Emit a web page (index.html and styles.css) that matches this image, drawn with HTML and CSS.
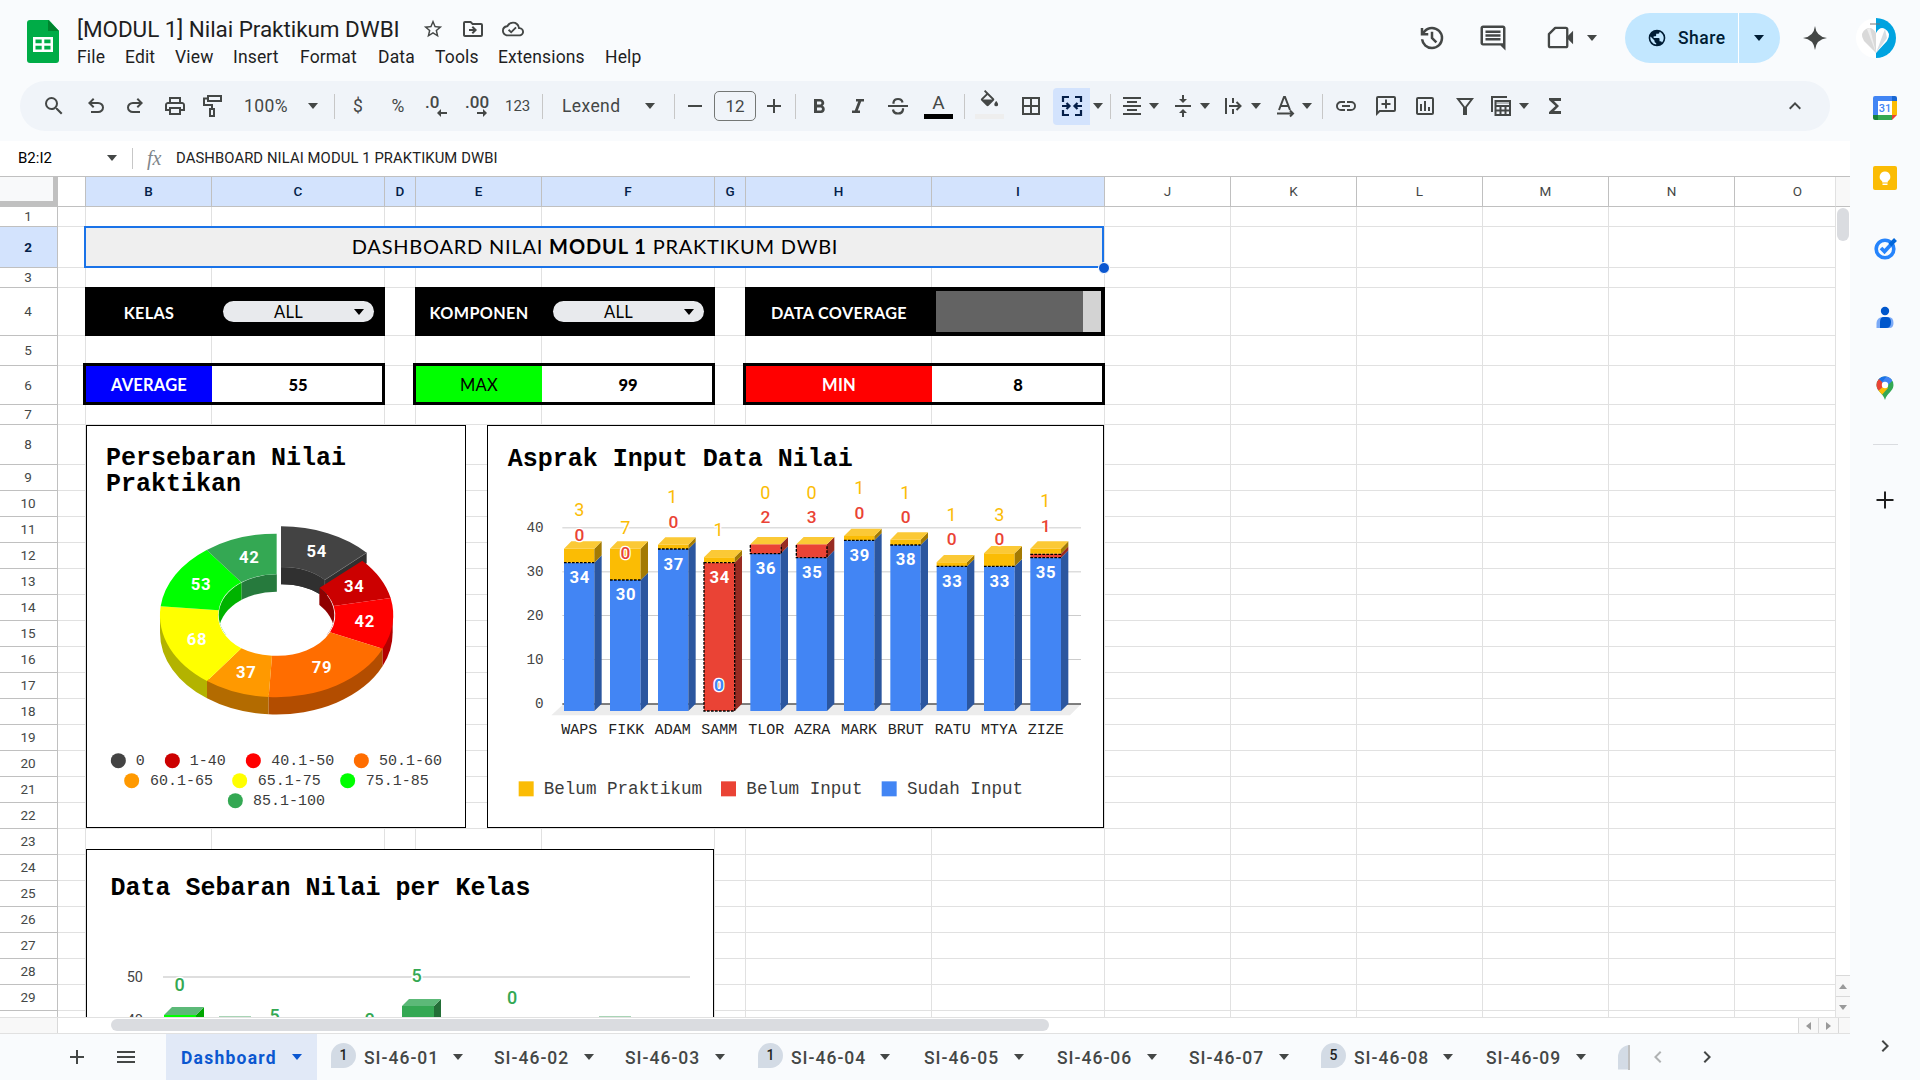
FILE: index.html
```html
<!DOCTYPE html>
<html lang="en">
<head>
<meta charset="utf-8">
<title>[MODUL 1] Nilai Praktikum DWBI</title>
<link rel="stylesheet" href="styles.css">
</head>
<body>
<svg class="defs" aria-hidden="true">
  <symbol id="caret" viewBox="0 0 10 6"><path d="M0 0h10L5 6z"/></symbol>
</svg>
<div class="app">
  <header class="top">
    <svg class="logo" viewBox="0 0 32 43"><path fill="#00ac47" d="M3 0h19l10 11v29a3 3 0 0 1-3 3H3a3 3 0 0 1-3-3V3a3 3 0 0 1 3-3z"/><path fill="#00832d" d="M21 0l11 11H21z"/><path fill="#fff" fill-rule="evenodd" d="M6 17h20v15H6zm2.500 2.500v3.700h6.200v-3.700zm8.800 0v3.700h6.200v-3.700zM8.500 25.700v3.700h6.200v-3.700zm8.800 0v3.700h6.200v-3.700z"/></svg>
    <div class="doc">
      <div class="doc-title">
        <h1>[MODUL 1] Nilai Praktikum DWBI</h1>
        <svg class="ic s22" viewBox="0 0 24 24"><path d="M22 9.240l-7.190-.620L12 2 9.190 8.630 2 9.240l5.460 4.730L5.820 21 12 17.270 18.180 21l-1.630-7.030L22 9.240zM12 15.400l-3.760 2.270 1-4.280-3.320-2.880 4.380-.380L12 6.100l1.710 4.040 4.380.380-3.320 2.880 1 4.280L12 15.400z"/></svg>
        <svg class="ic s24" viewBox="0 0 24 24"><path d="M20 6h-8l-2-2H4a2 2 0 0 0-2 2v12c0 1.100.900 2 2 2h16a2 2 0 0 0 2-2V8a2 2 0 0 0-2-2zm0 12H4V6h5.200l2 2H20v10zm-8-1l4-4-4-4-1.400 1.400 1.600 1.600H8v2h4.200l-1.600 1.600z"/></svg>
        <svg class="ic s22" viewBox="0 0 24 24"><path d="M19.350 10.040A7.490 7.490 0 0 0 12 4C9.110 4 6.600 5.640 5.350 8.040A5.994 5.994 0 0 0 0 14c0 3.310 2.690 6 6 6h13c2.760 0 5-2.240 5-5 0-2.640-2.050-4.780-4.650-4.960zM19 18H6c-2.210 0-4-1.790-4-4 0-2.050 1.530-3.760 3.560-3.970l1.070-.110.500-.950A5.469 5.469 0 0 1 12 6c2.620 0 4.880 1.860 5.390 4.430l.300 1.500 1.530.110A2.980 2.980 0 0 1 22 15c0 1.650-1.350 3-3 3zm-9-3.820l-2.090-2.090L6.500 13.500 10 17l6.010-6.010-1.410-1.410z"/></svg>
      </div>
      <nav class="menu"><span>File</span><span>Edit</span><span>View</span><span>Insert</span><span>Format</span><span>Data</span><span>Tools</span><span>Extensions</span><span>Help</span></nav>
    </div>
    <div class="actions">
      <svg class="ic s30" viewBox="0 0 24 24"><path d="M12 21q-3.450 0-6.012-2.288T3.050 13H5.100q.350 2.600 2.312 4.300T12 19q2.925 0 4.963-2.038T19 12t-2.037-4.962T12 5q-1.725 0-3.225.800T6.250 8H9v2H3V4h2v2.350q1.275-1.600 3.113-2.475T12 3q1.875 0 3.513.713t2.850 1.924 1.925 2.850T21 12t-.712 3.513-1.925 2.850-2.850 1.925T12 21m2.800-4.800L11 12.400V7h2v4.600l3.200 3.200z"/></svg>
      <svg class="ic s30" viewBox="0 0 24 24"><path d="M21.990 4c0-1.100-.890-2-1.990-2H4c-1.100 0-2 .900-2 2v12c0 1.100.900 2 2 2h14l4 4-.010-18zM20 4v12.200H4V4h16zM6 12h12v2H6zm0-3h12v2H6zm0-3h12v2H6z"/></svg>
      <svg class="ic meet" viewBox="0 0 28 28"><path fill="none" stroke="currentColor" stroke-width="2.400" stroke-linejoin="round" d="M8.500 3.500h11a1.500 1.500 0 0 1 1.500 1.500v17a1.500 1.500 0 0 1-1.500 1.500H3.500A1.500 1.500 0 0 1 2 22V10z"/><path d="M20 13.500l7-7v14z"/></svg>
      <svg class="ic caret"><use href="#caret"/></svg>
      <div class="share">
        <svg class="s20" viewBox="0 0 24 24"><path d="M12 2a10 10 0 1 0 0 20 10 10 0 0 0 0-20zm-1 17.930A7.990 7.990 0 0 1 4.210 10.200L9 15v1a2 2 0 0 0 2 2zm6.900-2.540A2 2 0 0 0 16 16h-1v-3a1 1 0 0 0-1-1H8v-2h2a1 1 0 0 0 1-1V7h2a2 2 0 0 0 2-2v-.410a7.990 7.990 0 0 1 2.900 12.800z"/></svg>
        <span>Share</span>
        <i></i>
        <svg class="caret"><use href="#caret"/></svg>
      </div>
      <svg class="ic gem" viewBox="0 0 24 24"><path d="M12 0q1.200 10.800 12 12-10.800 1.200-12 12Q10.800 13.200 0 12 10.800 10.800 12 0z"/></svg>
      <svg class="avatar" viewBox="0 0 40 40"><circle cx="20" cy="20" r="20" fill="#fff"/><path fill="#00a3e0" d="M20 0a20 20 0 0 1 0 40z"/><path fill="#d9d9d9" d="M20 15q-4-7-10-4-7 4-2 12l12 12z"/><path fill="#eee" d="M14 10l6 25-9-24z"/><path fill="#fff" d="M20 15q4-7 9-4 7 4 2 12L20 35z"/><path fill="#d5dde3" d="M29 11l2 9-11 15z"/><path stroke="#777" d="M14 6h10"/></svg>
    </div>
  </header>

  <div class="body">
    <main class="main">
      <div class="toolbar">
        <svg class="ic s24" viewBox="0 0 24 24"><path d="M15.500 14h-.790l-.280-.270A6.470 6.470 0 0 0 16 9.500 6.500 6.500 0 1 0 9.500 16c1.610 0 3.090-.590 4.230-1.570l.270.280v.790l5 4.990L20.490 19l-4.990-5zm-6 0a4.500 4.500 0 1 1 0-9 4.500 4.500 0 0 1 0 9z"/></svg>
        <svg class="ic s24" viewBox="0 0 24 24"><path d="M7 19v-2h7.100q1.575 0 2.738-1T18 13.500 16.838 11 14.100 10H7.800l2.600 2.600L9 14 4 9l5-5 1.400 1.400L7.800 8h6.300q2.425 0 4.163 1.575T20 13.500t-1.737 3.925T14.100 19z"/></svg>
        <svg class="ic s24" viewBox="0 0 24 24"><path d="M9.900 19q-2.425 0-4.163-1.575T4 13.500t1.738-3.925T9.900 8h6.300l-2.600-2.600L15 4l5 5-5 5-1.400-1.400 2.600-2.600H9.900q-1.575 0-2.737 1T6 13.500 7.163 16 9.900 17H17v2z"/></svg>
        <svg class="ic s24" viewBox="0 0 24 24"><path d="M19 8h-1V3H6v5H5c-1.660 0-3 1.340-3 3v6h4v4h12v-4h4v-6c0-1.660-1.340-3-3-3zM8 5h8v3H8V5zm8 12v2H8v-4h8v2zm2-2v-2H6v2H4v-4c0-.550.450-1 1-1h14c.550 0 1 .450 1 1v4h-2z"/></svg>
        <svg class="ic s24" viewBox="0 0 24 24"><path fill="none" stroke="currentColor" stroke-width="2" d="M7 2h13v5H7zM7 4.500H3V11h8v4M9 15h4v7H9z"/></svg>
        <span class="t zoom">100%</span>
        <svg class="ic caret"><use href="#caret"/></svg>
        <i class="sep"></i>
        <span class="t ctr">$</span>
        <span class="t ctr">%</span>
        <span class="t dec">.0<svg viewBox="0 0 10 8"><path d="M10 3H4V0L0 4l4 4V5h6z"/></svg></span>
        <span class="t dec">.00<svg viewBox="0 0 10 8"><path d="M0 3h6V0l4 4-4 4V5H0z"/></svg></span>
        <span class="t num">123</span>
        <i class="sep"></i>
        <span class="t font">Lexend</span>
        <svg class="ic caret"><use href="#caret"/></svg>
        <i class="sep"></i>
        <svg class="ic s24" viewBox="0 0 24 24"><path d="M5 11h14v2H5z"/></svg>
        <span class="size">12</span>
        <svg class="ic s24" viewBox="0 0 24 24"><path d="M5 11h6V5h2v6h6v2h-6v6h-2v-6H5z"/></svg>
        <i class="sep"></i>
        <svg class="ic s24" viewBox="0 0 24 24"><path d="M15.600 11.790c.970-.670 1.650-1.770 1.650-2.790 0-2.260-1.750-4-4-4H7v14h7.040c2.090 0 3.710-1.700 3.710-3.790 0-1.520-.860-2.820-2.150-3.420zM10 7.500h3c.830 0 1.500.670 1.500 1.500s-.670 1.500-1.500 1.500h-3v-3zm3.500 9H10v-3h3.500c.830 0 1.500.670 1.500 1.500s-.670 1.500-1.500 1.500z"/></svg>
        <svg class="ic s24" viewBox="0 0 24 24"><path d="M10 5v2.500h2.210l-3.420 9H6V19h8v-2.500h-2.210l3.420-9H18V5z"/></svg>
        <svg class="ic s24" viewBox="0 0 24 24"><path d="M2 11h20v2H2z"/><path fill="none" stroke="currentColor" stroke-width="2.200" d="M16.500 8.500Q16 5 12 5T7.500 8.500v1.200M7 15.500q.500 4 5 4t5-4v-1.200"/></svg>
        <span class="ink"><b>A</b><i class="black"></i></span>
        <i class="sep"></i>
        <span class="ink"><svg class="ic s24" viewBox="0 0 24 24"><path d="M16.560 8.940L7.620 0 6.210 1.410l2.380 2.380-5.150 5.150a1.490 1.490 0 0 0 0 2.120l5.500 5.500c.290.290.680.440 1.060.440s.770-.150 1.060-.440l5.500-5.500c.590-.580.590-1.530 0-2.120zM5.210 10L10 5.210 14.790 10H5.210zM19 11.500s-2 2.170-2 3.500a2 2 0 0 0 4 0c0-1.330-2-3.500-2-3.500z"/></svg><i></i></span>
        <svg class="ic s24" viewBox="0 0 24 24"><path d="M3 3v18h18V3H3zm8 16H5v-6h6v6zm0-8H5V5h6v6zm8 8h-6v-6h6v6zm0-8h-6V5h6v6z"/></svg>
        <span class="merge"><svg class="s24" viewBox="0 0 24 24"><path fill="none" stroke="currentColor" stroke-width="2.200" d="M9 3H3v5M3 16v5h6M15 3h6v5M21 16v5h-6M2 12h7M22 12h-7M6.500 9l3 3-3 3M17.500 9l-3 3 3 3"/></svg></span>
        <svg class="ic caret"><use href="#caret"/></svg>
        <i class="sep"></i>
        <svg class="ic s24" viewBox="0 0 24 24"><path d="M7 15v2h10v-2H7zm-4 6h18v-2H3v2zm0-8h18v-2H3v2zm4-6v2h10V7H7zM3 3v2h18V3H3z"/></svg>
        <svg class="ic caret"><use href="#caret"/></svg>
        <svg class="ic s24" viewBox="0 0 24 24"><path d="M8 19h3v4h2v-4h3l-4-4-4 4zm8-14h-3V1h-2v4H8l4 4 4-4zM4 11v2h16v-2H4z"/></svg>
        <svg class="ic caret"><use href="#caret"/></svg>
        <svg class="ic s24" viewBox="0 0 24 24"><path fill="none" stroke="currentColor" stroke-width="2" d="M5 4v16M12 4v5M12 15v5M8 12h11M15.500 8l4 4-4 4"/></svg>
        <svg class="ic caret"><use href="#caret"/></svg>
        <svg class="ic s24" viewBox="0 0 24 24"><path fill="none" stroke="currentColor" stroke-width="2" d="M6 16l5-13h1l5 13M8 12h7M4 19.500h16M17 16.500l3 3-3 3"/></svg>
        <svg class="ic caret"><use href="#caret"/></svg>
        <i class="sep"></i>
        <svg class="ic s24" viewBox="0 0 24 24"><path d="M3.900 12c0-1.710 1.390-3.100 3.100-3.100h4V7H7a5 5 0 0 0 0 10h4v-1.900H7A3.100 3.100 0 0 1 3.900 12zM8 13h8v-2H8v2zm9-6h-4v1.900h4a3.100 3.100 0 0 1 0 6.200h-4V17h4a5 5 0 0 0 0-10z"/></svg>
        <svg class="ic s24" viewBox="0 0 24 24"><path d="M22 4a2 2 0 0 0-2-2H4a2 2 0 0 0-2 2v18l4-4h14a2 2 0 0 0 2-2V4zM4 4h16v12H5.200L4 17.200V4zm7 1.500h2V9h3.500v2H13v3.500h-2V11H7.500V9H11z"/></svg>
        <svg class="ic s24" viewBox="0 0 24 24"><path d="M19 3H5a2 2 0 0 0-2 2v14c0 1.100.900 2 2 2h14a2 2 0 0 0 2-2V5a2 2 0 0 0-2-2zm0 16H5V5h14v14zM7 10h2v7H7zm4-3h2v10h-2zm4 6h2v4h-2z"/></svg>
        <svg class="ic s24" viewBox="0 0 24 24"><path fill="none" stroke="currentColor" stroke-width="2" d="M5 5h14l-6 8v7h-2v-7z"/></svg>
        <svg class="ic s24" viewBox="0 0 24 24"><path fill="none" stroke="currentColor" stroke-width="2" d="M3 18V3h15M6.500 7H21v14H6.500zM6 12h15M6 16.500h15M11.500 12v9M16.500 12v9"/><path d="M6 6h15v4H6z" opacity=".35"/></svg>
        <svg class="ic caret"><use href="#caret"/></svg>
        <svg class="ic s24" viewBox="0 0 24 24"><path d="M18 4H6v2l6.500 6L6 18v2h12v-3h-7l5-5-5-5h7z"/></svg>
        <svg class="ic s24" viewBox="0 0 24 24"><path d="M12 8l-6 6 1.410 1.410L12 10.830l4.590 4.580L18 14z"/></svg>
      </div>

      <div class="fbar">
        <span class="ref">B2:I2</span>
        <svg class="ic caret"><use href="#caret"/></svg>
        <i class="sep"></i>
        <em>fx</em>
        <span class="formula">DASHBOARD NILAI MODUL 1 PRAKTIKUM DWBI</span>
      </div>

      <div class="sheet">
        <div class="grid">
          <div class="colheads"><span class="corner"></span><span></span><span class="on">B</span><span class="on">C</span><span class="on">D</span><span class="on">E</span><span class="on">F</span><span class="on">G</span><span class="on">H</span><span class="on">I</span><span>J</span><span>K</span><span>L</span><span>M</span><span>N</span><span class="last">O</span></div>
          <div class="rowheads"><span>1</span><span class="on">2</span><span>3</span><span>4</span><span>5</span><span>6</span><span>7</span><span>8</span><span>9</span><span>10</span><span>11</span><span>12</span><span>13</span><span>14</span><span>15</span><span>16</span><span>17</span><span>18</span><span>19</span><span>20</span><span>21</span><span>22</span><span>23</span><span>24</span><span>25</span><span>26</span><span>27</span><span>28</span><span>29</span><span></span></div>
          <div class="collines"><i></i><i></i><i></i><i></i><i></i><i></i><i></i><i></i><i></i><i></i><i></i><i></i><i></i><i></i><i></i></div>
          <div class="rowlines"><i></i><i></i><i></i><i></i><i></i><i></i><i></i><i></i><i></i><i></i><i></i><i></i><i></i><i></i><i></i><i></i><i></i><i></i><i></i><i></i><i></i><i></i><i></i><i></i><i></i><i></i><i></i><i></i><i></i></div>

          <div class="heading"><span>DASHBOARD NILAI <b>MODUL 1</b> PRAKTIKUM DWBI</span><i class="handle"></i></div>

          <div class="ctl kelas"><b>KELAS</b><div class="chip"><span>ALL</span><svg class="caret"><use href="#caret"/></svg></div></div>
          <div class="ctl komponen"><b>KOMPONEN</b><div class="chip"><span>ALL</span><svg class="caret"><use href="#caret"/></svg></div></div>
          <div class="ctl cover"><b>DATA COVERAGE</b><div class="bar"><i></i></div></div>

          <div class="stat avg"><b>AVERAGE</b><strong>55</strong></div>
          <div class="stat max"><b>MAX</b><strong>99</strong></div>
          <div class="stat min"><b>MIN</b><strong>8</strong></div>

          <svg class="chart pie" viewBox="48 30 1140 1209">
            <defs><clipPath id="hole"><ellipse cx="619.500" cy="600" rx="173.500" ry="122"/></clipPath></defs>
            <g class="ctitle"><text x="108" y="151">Persebaran Nilai</text><text x="108" y="227">Praktikan</text></g>
            <path fill="#303030" d="M633 457Q710 457 764 495L890 413V445L764 547Q710 508 633 508z"/>
            <path fill="#434343" d="M633 334A349 245 0 0 1 890 413L764 495A173 122 0 0 0 633 457z"/>
            <path fill="none" stroke="#777" stroke-width="1.500" d="M633 457A173 122 0 0 1 764 495L890 413M764 495v20"/>
            <path fill="#b3b300" d="M270 601V653A349 245 0 0 0 411 850V790z"/>
            <path fill="#b36b00" d="M411 790V850A349 245 0 0 0 596 898V840z"/>
            <path fill="#b34d00" d="M596 840V898A349 245 0 0 0 938 753V695z"/>
            <path fill="#b30000" d="M938 695V753Q968 705 968 653V601z"/>
            <g clip-path="url(#hole)"><path fill="#00b300" d="M440 480h75v180h-75z"/><path fill="#267a3d" d="M515 470h105.500v100H515z"/><path fill="#8f0000" d="M748 500h50v160h-50z"/><ellipse cx="619.500" cy="652" rx="173.500" ry="122" fill="#fff"/></g>
            <path fill="#303030" d="M633 457A173 122 0 0 1 764 495L748 517V537A173 122 0 0 0 633 508z"/>
            <path fill="#cc0000" d="M877 437A349 245 0 0 1 962 549L791 573A173.500 122 0 0 0 749 518z"/>
            <path fill="#ff0000" d="M962 549A349 245 0 0 1 938 701L780 652A173.500 122 0 0 0 791 573z"/>
            <path fill="#ff6d00" d="M938 701A349 245 0 0 1 596 846L606 722A173.500 122 0 0 0 780 652z"/>
            <path fill="#ff9900" d="M596 846A349 245 0 0 1 411 798L514 700A173.500 122 0 0 0 606 722z"/>
            <path fill="#ffff00" d="M411 798A349 245 0 0 1 272 574L446 586A173.500 122 0 0 0 514 700z"/>
            <path fill="#00ff00" d="M272 574A349 245 0 0 1 410 405L514 502A173.500 122 0 0 0 446 586z"/>
            <path fill="#34a853" d="M410 405A349 245 0 0 1 620 356V478A173.500 122 0 0 0 514 502z"/>
            <g class="wl"><text x="740" y="426">54</text><text x="853" y="531">34</text><text x="884" y="636">42</text><text x="756" y="773">79</text><text x="529" y="789">37</text><text x="381" y="690">68</text><text x="393" y="525">53</text><text x="538" y="444">42</text></g>
            <g class="lg"><circle cx="145" cy="1037" r="22.500" fill="#434343"/><circle cx="307" cy="1037" r="22.500" fill="#c00"/><circle cx="550" cy="1037" r="22.500" fill="red"/><circle cx="874" cy="1037" r="22.500" fill="#ff6d00"/><circle cx="185" cy="1097" r="22.500" fill="#f90"/><circle cx="509" cy="1097" r="22.500" fill="#ff0"/><circle cx="833" cy="1097" r="22.500" fill="#0f0"/><circle cx="496" cy="1157" r="22.500" fill="#34a853"/>
            <text x="197" y="1051">0</text><text x="359" y="1051">1-40</text><text x="604" y="1051">40.1-50</text><text x="927" y="1051">50.1-60</text><text x="240" y="1111">60.1-65</text><text x="563" y="1111">65.1-75</text><text x="887" y="1111">75.1-85</text><text x="549" y="1171">85.1-100</text></g>
          </svg>

          <svg class="chart asprak" viewBox="21 30 1851 1209">
            <g class="ctitle"><text x="83" y="154">Asprak Input Data Nilai</text></g>
            <path stroke="#ccc" stroke-width="3" d="M247 338.500H1803M247 470.500H1803M247 601.500H1803M247 733.500H1803"/>
            <path fill="#ececec" d="M214 901L250 868H1803L1770 901z"/><path stroke="#555" stroke-width="4" d="M247 867H1803"/>
            <g class="blue"><path d="M252 443h91v445h-91zM390 495h92v393h-92zM534 402h91v486h-91zM811 416h91v472h-91zM949 428h92v460h-92zM1092 376h91v512h-91zM1231 390h91v498h-91zM1370 454h91v434h-91zM1512 454h92v434h-92zM1651 428h92v460h-92z"/></g>
            <g class="blued"><path d="M343 443l22-22V866l-22 22zM482 495l22-22V866l-22 22zM625 402l22-22V866l-22 22zM902 416l22-22V866l-22 22zM1041 428l22-22V866l-22 22zM1183 376l22-22V866l-22 22zM1322 390l22-22V866l-22 22zM1461 454l22-22V866l-22 22zM1604 454l22-22V866l-22 22zM1743 428l22-22V866l-22 22z"/></g>
            <g class="red"><path d="M672 443h92v445h-92zM811 388h91v28h-91zM949 388h92v40h-92zM1651 416h92v12h-92z"/></g>
            <g class="redd"><path d="M764 443l22-22V866l-22 22zM902 388l22-22v28l-22 22zM1041 388l22-22v40l-22 22zM1743 416l22-22v12l-22 22z"/></g>
            <g class="yel"><path d="M252 401h91v42h-91zM390 401h92v94h-92zM534 389h91v13h-91zM672 427h92v16h-92zM1092 363h91v13h-91zM1231 374h91v16h-91zM1370 442h91v12h-91zM1512 415h92v39h-92zM1651 401h92v15h-92z"/></g>
            <g class="yeld"><path d="M343 401l22-22v42l-22 22zM482 401l22-22v94l-22 22zM625 389l22-22v13l-22 22zM764 427l22-22v16l-22 22zM1183 363l22-22v13l-22 22zM1322 374l22-22v16l-22 22zM1461 442l22-22v12l-22 22zM1604 415l22-22v39l-22 22zM1743 401l22-22v15l-22 22z"/></g>
            <g class="yelt"><path d="M252 401l22-22h91l-22 22zM390 401l22-22h92l-22 22zM534 389l22-22h91l-22 22zM672 427l22-22h92l-22 22zM811 388l22-22h91l-22 22zM949 388l22-22h92l-22 22zM1092 363l22-22h91l-22 22zM1231 374l22-22h91l-22 22zM1370 442l22-22h91l-22 22zM1512 415l22-22h92l-22 22zM1651 401l22-22h92l-22 22z"/></g>
            <path class="dash" d="M252 443h91M390 495h92M534 402h91M1092 376h91M1231 390h91M1370 454h91M1512 454h92M672 443h92v445h-92zM811 390v26h93v-26M949 390v38h92v-38M1651 418h92M1651 428h92"/>
            <g class="yn"><text x="298" y="303">3</text><text x="436" y="356">7</text><text x="577" y="263">1</text><text x="716" y="362">1</text><text x="856" y="251">0</text><text x="995" y="251">0</text><text x="1138" y="236">1</text><text x="1276" y="251">1</text><text x="1415" y="318">1</text><text x="1558" y="318">3</text><text x="1696" y="276">1</text></g>
            <g class="rn"><text x="298" y="379">0</text><text x="436" y="431">0</text><text x="580" y="340">0</text><text x="856" y="325">2</text><text x="995" y="325">3</text><text x="1138" y="313">0</text><text x="1277" y="325">0</text><text x="1415" y="391">0</text><text x="1558" y="391">0</text><text x="1697" y="351">1</text><text class="bn" x="717" y="827">0</text></g>
            <g class="wl"><text x="299" y="505">34</text><text x="438" y="556">30</text><text x="581" y="465">37</text><text x="719" y="505">34</text><text x="858" y="478">36</text><text x="997" y="489">35</text><text x="1139" y="438">39</text><text x="1278" y="450">38</text><text x="1417" y="516">33</text><text x="1559" y="516">33</text><text x="1698" y="489">35</text></g>
            <g class="ax"><text x="191" y="352">40</text><text x="191" y="484">30</text><text x="191" y="616">20</text><text x="191" y="748">10</text><text x="191" y="880">0</text></g>
            <g class="cat"><text x="298" y="958">WAPS</text><text x="439" y="958">FIKK</text><text x="578" y="958">ADAM</text><text x="718" y="958">SAMM</text><text x="859" y="958">TLOR</text><text x="997" y="958">AZRA</text><text x="1137" y="958">MARK</text><text x="1277" y="958">BRUT</text><text x="1418" y="958">RATU</text><text x="1557" y="958">MTYA</text><text x="1697" y="958">ZIZE</text></g>
            <path fill="#fbbc04" d="M116 1099h45v45h-45z"/><path fill="#ea4335" d="M723 1099h45v45h-45z"/><path fill="#4285f4" d="M1205 1099h45v45h-45z"/>
            <g class="lg big"><text x="191" y="1138">Belum Praktikum</text><text x="799" y="1138">Belum Input</text><text x="1281" y="1138">Sudah Input</text></g>
          </svg>

          <svg class="chart sebaran" viewBox="86 849 628 180">
            <text class="ctitle" x="110.500" y="895">Data Sebaran Nilai per Kelas</text>
            <path stroke="#dedede" stroke-width="2" d="M163 977H690"/>
            <g class="axs"><text x="143" y="982">50</text><text x="143" y="1025">40</text></g>
            <path fill="#0f0" d="M164 1015h32v8h-32z"/><path fill="#00a600" d="M196 1015l8-8v16h-8z"/><path fill="#5cb978" d="M164 1015l8-8h32l-8 8z"/>
            <path fill="#34a853" d="M402 1006h32v16h-32z"/><path fill="#236f37" d="M434 1006l7-7v22h-7z"/><path fill="#5cb978" d="M402 1006l7-7h32l-7 7z"/>
            <path fill="#a9d5b6" d="M219 1016h32v2h-32zM599 1016h32v2h-32z"/>
            <g class="gn"><text x="179.500" y="991">0</text><text x="416.500" y="982">5</text><text x="512" y="1004">0</text><text x="274.500" y="1022">5</text><text x="369.500" y="1026">0</text></g>
          </svg>
        </div>
        <div class="vscroll"><span class="vhead"></span><i class="thumb"></i><span class="vbtn"><svg viewBox="0 0 8 5"><path d="M0 5h8L4 0z"/></svg></span><span class="vbtn"><svg viewBox="0 0 8 5"><path d="M0 0h8L4 5z"/></svg></span></div>
      </div>
      <div class="hscroll"><span class="hhead"></span><i class="thumb"></i><span class="hbtn"><svg viewBox="0 0 5 8"><path d="M5 0v8L0 4z"/></svg></span><span class="hbtn"><svg viewBox="0 0 5 8"><path d="M0 0v8l5-4z"/></svg></span><span class="hend"></span></div>

      <footer class="tabs">
        <svg class="ic s24" viewBox="0 0 24 24"><path d="M5 11h6V5h2v6h6v2h-6v6h-2v-6H5z"/></svg>
        <svg class="ic s24" viewBox="0 0 24 24"><path d="M3 18h18v-2H3v2zm0-5h18v-2H3v2zm0-7v2h18V6H3z"/></svg>
        <div class="tab active"><span>Dashboard</span><svg class="caret"><use href="#caret"/></svg></div>
        <div class="tab"><i class="badge">1</i><span>SI-46-01</span><svg class="caret"><use href="#caret"/></svg></div>
        <div class="tab"><span>SI-46-02</span><svg class="caret"><use href="#caret"/></svg></div>
        <div class="tab"><span>SI-46-03</span><svg class="caret"><use href="#caret"/></svg></div>
        <div class="tab"><i class="badge">1</i><span>SI-46-04</span><svg class="caret"><use href="#caret"/></svg></div>
        <div class="tab"><span>SI-46-05</span><svg class="caret"><use href="#caret"/></svg></div>
        <div class="tab"><span>SI-46-06</span><svg class="caret"><use href="#caret"/></svg></div>
        <div class="tab"><span>SI-46-07</span><svg class="caret"><use href="#caret"/></svg></div>
        <div class="tab"><i class="badge">5</i><span>SI-46-08</span><svg class="caret"><use href="#caret"/></svg></div>
        <div class="tab"><span>SI-46-09</span><svg class="caret"><use href="#caret"/></svg></div>
        <div class="cut"></div>
        <svg class="ic s24 dim" viewBox="0 0 24 24"><path d="M15.410 7.410L14 6l-6 6 6 6 1.410-1.410L10.830 12z"/></svg>
        <svg class="ic s24" viewBox="0 0 24 24"><path d="M10 6L8.590 7.410 13.170 12l-4.580 4.590L10 18l6-6z"/></svg>
      </footer>
    </main>

    <aside class="side">
      <svg class="s24" viewBox="0 0 24 24"><path fill="#4285f4" d="M0 2a2 2 0 0 1 2-2h17v5H5v14H0z"/><path fill="#1967d2" d="M19 0h3a2 2 0 0 1 2 2v3h-5z"/><path fill="#fbbc04" d="M19 5h5v14h-5z"/><path fill="#34a853" d="M5 19h14v5H5z"/><path fill="#188038" d="M0 19h5v5H2a2 2 0 0 1-2-2z"/><path fill="#ea4335" d="M19 24v-5h5z"/><path fill="#fff" d="M5 5h14v14H5z"/><text x="12" y="16" font-family="Roboto" font-size="11" font-weight="500" text-anchor="middle" fill="#4285f4">31</text></svg>
      <svg class="s24" viewBox="0 0 24 24"><rect width="24" height="24" rx="2" fill="#fbbc04"/><path fill="#fff" d="M12 5.500a5.300 5.300 0 0 0-2.800 9.800v1.200h5.600v-1.200A5.300 5.300 0 0 0 12 5.500zM9.500 17.500h5v1.500h-5z"/></svg>
      <svg class="s24" viewBox="0 0 24 24"><circle cx="12" cy="13" r="8.800" fill="none" stroke="#2684fc" stroke-width="3.600"/><path fill="none" stroke="#2684fc" stroke-width="3.800" d="M8 12l3.500 3.500 7-7.500"/><path stroke="#0066da" stroke-width="4" d="M17 9l5.500-5.500"/></svg>
      <svg class="s24" viewBox="0 0 24 24"><path fill="#7baaf7" d="M3.500 22v-5a6 6 0 0 1 6-6h6q5 0 5 6 0 5-4 5z"/><path fill="#0057cc" d="M7 22v-6q0-5 4-5h2q5 0 5 5 0 6-5 6z"/><circle cx="12" cy="5" r="4.200" fill="#0057cc"/></svg>
      <svg class="s24" viewBox="0 0 24 24"><defs><clipPath id="pin"><path d="M12 .5A8.500 8.500 0 0 1 20.500 9c0 6-6.500 8-8.500 15C10 17 3.500 15 3.500 9A8.500 8.500 0 0 1 12 .5z"/></clipPath></defs><g clip-path="url(#pin)"><path fill="#34a853" d="M0 0h24v24H0z"/><path fill="#4285f4" d="M5 0h18v1L9 14z"/><path fill="#1a73e8" d="M5 0h9l-5 9-4-5z"/><path fill="#ea4335" d="M0 3h6l6 6-8 8H0z"/><path fill="#fbbc04" d="M4 16l8-7 3 3-8 9z"/><path fill="#4285f4" d="M14 0l8 2-8 8-2-1-3-3z"/></g><circle cx="12" cy="9" r="3.200" fill="#fff"/></svg>
      <hr>
      <svg class="s24" viewBox="0 0 24 24"><path d="M3.500 11h7.500V3.500h2V11h7.500v2H13v7.500h-2V13H3.500z"/></svg>
      <svg class="ic s24" viewBox="0 0 24 24"><path d="M10 6L8.590 7.410 13.170 12l-4.580 4.590L10 18l6-6z"/></svg>
    </aside>
  </div>
</div>
</body>
</html>
```

FILE: styles.css
```css
* { box-sizing: border-box; }
body { margin: 0; background: #f9fbfd; color: #1f1f1f; font-family: Roboto, "Open Sans", sans-serif; overflow: hidden; }
svg { display: block; fill: currentColor; flex: none; }
.defs { width: 0; height: 0; position: absolute; }
.app { width: 1920px; height: 1080px; display: flex; flex-direction: column; }
.ic { color: #444746; }
.caret { width: 10px; height: 6px; }
.s20 { width: 20px; height: 20px; }
.s22 { width: 22px; height: 22px; }
.s24 { width: 24px; height: 24px; }
.s30 { width: 30px; height: 30px; }

/* document header */
.top { height: 81px; flex: none; display: flex; align-items: flex-start; padding-left: 27px; }
.logo { width: 32px; height: 43px; margin-top: 20px; }
.doc { padding: 13px 0 0 18px; width: 620px; }
.doc-title { display: grid; grid-template-columns: 345px 39px 41px 22px; align-items: center; height: 31px; }
.doc-title h1 { margin: 0; font: 400 22.500px/30px Roboto, sans-serif; letter-spacing: -.060px; white-space: nowrap; color: #1f1f1f; }
.menu { display: grid; grid-template-columns: 48px 50px 58px 67px 78px 57px 63px 107px 50px; font-size: 17.500px; line-height: 26px; letter-spacing: .15px; }
.actions { margin-left: auto; width: 503px; height: 76px; display: grid; grid-template-columns: 61px 69px 40px 38px 178px 53px 64px; align-items: center; }
.meet { width: 27px; height: 28px; }
.share { width: 155px; height: 50px; border-radius: 25px; background: #c2e7ff; color: #001d35; display: flex; align-items: center; padding-left: 22px; font-size: 17.500px; font-weight: 500; }
.share span { width: 60px; margin-left: 11px; letter-spacing: .5px; }
.share i { width: 1px; height: 50px; background: #fff; margin-right: 15px; }
.gem { width: 24px; height: 24px; }
.avatar { width: 40px; height: 40px; }

.body { display: flex; flex: 1; min-height: 0; }
.main { width: 1850px; display: flex; flex-direction: column; }

/* toolbar: every track runs from one control's left edge to the next */
.toolbar { width: 1810px; height: 50px; margin-left: 20px; margin-bottom: 10px; flex: none; padding-left: 22px; border-radius: 25px; background: #f0f4f9; display: grid; align-items: center; color: #444746;
  grid-template-columns: 42px 39px 40px 38px 43px 64px 26px 12px 40px 39px 40px 40px 37px 20px 83px 29px 9px 31px 48px 33px 12px 39px 40px 38px 40px 11px 44px 34px 40px 17px 10px 29px 22px 29px 21px 30px 22px 29px 20px 12px 40px 39px 40px 36px 30px 24px 240px 24px; }
.sep { width: 1px; height: 25px; background: #c7c7c7; }
.t { font-size: 17.500px; letter-spacing: .4px; white-space: nowrap; }
.ctr { width: 24px; text-align: center; }
.num { font-size: 15px; font-weight: 400; letter-spacing: 0; }
.dec { font-size: 17px; font-weight: 500; letter-spacing: 0; line-height: 16px; height: 24px; }
.dec svg { width: 10px; height: 8px; margin: -1px 0 0 12px; }
.size { width: 42px; height: 30px; border: 1px solid #747775; border-radius: 5px; font-size: 17px; line-height: 28px; text-align: center; }
.ink { width: 29px; height: 34px; display: flex; flex-direction: column; align-items: center; justify-content: flex-end; position: relative; top: -4px; }
.ink b { font: 400 19px/22px Roboto, sans-serif; }
.ink svg { margin-bottom: 1px; width: 23px; height: 23px; }
.ink i { width: 29px; height: 5px; background: #eee; }
.ink .black { background: #000; }
.merge { width: 37px; height: 37px; border-radius: 4px 0 0 4px; background: #d3e3fd; color: #041e49; display: grid; place-items: center; }

/* formula bar */
.fbar { height: 36px; flex: none; background: #fff; border-bottom: 1px solid #c0c0c0; display: grid; grid-template-columns: 89px 25px 15px 29px 1fr; padding: 1px 0 2px 18px; align-items: center; }
.fbar .ref { font-size: 15px; color: #000; }
.fbar .sep { height: 21px; }
.fbar em { font: italic 20px/20px "Liberation Serif", serif; color: #80868b; }
.formula { font-size: 14.800px; letter-spacing: .1px; color: #222; }

/* spreadsheet */
.sheet { height: 840px; flex: none; display: flex; }
.grid { --head: 58px; --cols: 28px 126px 173px 31px 126px 173px 31px 186px 173px 126px 126px 126px 126px 126px 101px;
  --rows: 20px 41px 20px 48px 30px 39px 20px 40px repeat(21, 26px) 6px;
  position: relative; width: 1836px; height: 840px; overflow: hidden; background: #fff; display: grid; grid-template-columns: var(--head) var(--cols); grid-template-rows: 30px var(--rows); }
.colheads { grid-area: 1 / 1 / 2 / -1; display: grid; grid-template-columns: var(--head) var(--cols); }
.colheads span { border-right: 1px solid #c0c0c0; border-bottom: 1px solid #c0c0c0; text-align: center; font-size: 13.500px; line-height: 28px; color: #444746; }
.colheads .last { padding-left: 25px; border-right-color: #e1e1e1; }
.colheads .corner { background: #f8f9fa; border-right: 5px solid #c0c0c0; border-bottom: 6px solid #c0c0c0; }
.colheads .on, .rowheads .on { background: #d3e3fd; color: #041e49; }
.colheads .on { font-weight: 500; }
.rowheads { grid-area: 2 / 1 / -1 / 2; display: grid; grid-template-rows: var(--rows); border-right: 1px solid #c0c0c0; }
.rowheads span { border-bottom: 1px solid #c0c0c0; display: grid; place-items: center; font-size: 13.500px; line-height: 16px; color: #444746; padding: 0 1px 1px 0; }
.rowheads .on { font-weight: 700; }
.rowheads span:last-child { border: 0; }
.collines { grid-area: 2 / 2 / -1 / -1; display: grid; grid-template-columns: var(--cols); }
.collines i { border-right: 1px solid #e1e1e1; }
.rowlines { grid-area: 2 / 2 / -1 / -1; display: grid; grid-template-rows: var(--rows); }
.rowlines i { border-bottom: 1px solid #e1e1e1; }

.heading { grid-area: 3 / 3 / 4 / 11; margin: -1px 1px 0 -2px; padding-left: 2px; border: 2px solid #1a73e8; background: #efefef; display: grid; justify-items: center; color: #000; font: 400 20px/36px Lato, sans-serif; letter-spacing: .78px; position: relative; }
.heading b { letter-spacing: .9px; }
.handle { position: absolute; right: -8px; bottom: -8px; width: 12px; height: 12px; border-radius: 50%; background: #0b57d0; border: 1px solid #fff; }
.ctl, .stat { font-family: Lato, sans-serif; font-size: 16.500px; display: grid; align-items: center; text-align: center; color: #fff; grid-template-columns: 127px 1fr; }
.ctl { background: #000; margin: -1px 0 0 -1px; letter-spacing: .35px; }
.ctl b { padding: 1px 0 0 1px; font-size: 16.200px; }
.kelas { grid-area: 5 / 3 / 6 / 5; }
.komponen { grid-area: 5 / 6 / 6 / 8; }
.cover { grid-area: 5 / 9 / 6 / 11; grid-template-columns: 187px 1fr; }
.chip { margin: 0 11px; height: 21px; border-radius: 11px; background: #e8eaed; color: #000; display: flex; align-items: center; padding-right: 10px; }
.chip span { flex: 1; line-height: 21px; padding-top: 1px; }
.cover .bar { height: 41px; margin: 0 4px; background: #d3d3d3; }
.cover .bar i { display: block; width: 147px; height: 41px; background: #636363; }
.stat { border: 3px solid #000; margin: -3px 0 0 -3px; background: #fff; line-height: 34px; grid-template-columns: 126px 1fr; }
.stat b, .stat strong { padding-top: 2px; }
.stat strong { color: #000; font-weight: 900; padding-left: 2px; }
.stat b { letter-spacing: .2px; }
.avg { grid-area: 7 / 3 / 8 / 5; }
.avg b { background: #00f; }
.max { grid-area: 7 / 6 / 8 / 8; }
.max b { background: #0f0; color: #000; font-weight: 400; }
.min { grid-area: 7 / 9 / 8 / 11; grid-template-columns: 186px 1fr; }
.min b { background: red; }

/* charts float over the cells */
.chart { position: absolute; background: #fff; outline: 1px solid #000; outline-offset: -1px; }
.pie { left: 86px; top: 248px; width: 380px; height: 403px; }
.asprak { left: 487px; top: 248px; width: 617px; height: 403px; }
.sebaran { left: 86px; top: 672px; width: 628px; height: 180px; }
.ctitle { font: 700 75px "Liberation Mono", monospace; fill: #000; }
.sebaran .ctitle { font-size: 25px; }
.wl { font: 700 50px Roboto, sans-serif; letter-spacing: 2px; fill: #fff; text-anchor: middle; }
.lg { font: 400 45px "Liberation Mono", monospace; fill: #3c3c3c; }
.big { font-size: 52.800px; }
.ax { font: 400 43px "Liberation Mono", monospace; fill: #444; text-anchor: end; }
.cat { font: 400 45px "Liberation Mono", monospace; fill: #222; text-anchor: middle; }
.blue { fill: #4285f4; }
.blued { fill: #2b569f; }
.red { fill: #ea4335; }
.redd { fill: #982b22; }
.yel { fill: #fbbc04; }
.yeld { fill: #a37a03; }
.yelt { fill: #fbc936; }
.dash { fill: none; stroke: #000; stroke-width: 4px; stroke-dasharray: 8 4; }
.yn, .rn, .gn { font: 400 54px Roboto, sans-serif; fill: #fbbc04; text-anchor: middle; stroke: #fff; stroke-width: 8px; paint-order: stroke; stroke-linejoin: round; }
.rn { fill: #ea4335; font-size: 52px; font-weight: 500; }
.bn { fill: #4285f4; font-weight: 700; }
.gn { font-size: 18px; font-weight: 500; fill: #34a853; stroke-width: 3px; }
.axs { font: 400 14.500px Roboto, sans-serif; fill: #444; text-anchor: end; }

/* scrollbars */
.vscroll { width: 14px; background: #fff; display: flex; flex-direction: column; }
.vhead { height: 30px; background: #f8f8f8; border-bottom: 1px solid #c0c0c0; }
.vscroll .thumb { width: 12px; height: 33px; margin: 1px 0 auto 1px; border-radius: 6px; background: #dadce0; }
.vbtn { height: 21px; background: #f8f8f8; border-top: 1px solid #d9d9d9; display: grid; place-items: center; color: #999; }
.vbtn svg { width: 8px; height: 5px; }
.hscroll { height: 17px; flex: none; display: flex; background: #fff; border-top: 1px solid #e1e1e1; border-bottom: 1px solid #e1e1e1; }
.hhead { width: 58px; background: #f8f8f8; border-right: 1px solid #d9d9d9; }
.hscroll .thumb { width: 938px; height: 12px; margin: 1px auto 0 53px; border-radius: 6px; background: #dadce0; }
.hbtn { width: 20px; background: #f8f8f8; border-left: 1px solid #d9d9d9; display: grid; place-items: center; color: #999; }
.hbtn svg { width: 5px; height: 8px; }
.hend { width: 12px; background: #f8f8f8; border-left: 1px solid #d9d9d9; }

/* sheet tabs */
.tabs { flex: 1; padding-left: 65px; display: grid; align-items: center; grid-template-columns: 49px 52px 165px 163px 131px 133px 166px 133px 132px 132px 165px 132px 28px 49px 24px; }
.tab { height: 46px; display: flex; align-items: center; color: #444746; font-size: 17.500px; font-weight: 500; letter-spacing: 1px; white-space: nowrap; }
.tab span { width: 76px; padding-top: 1px; }
.tab .caret { margin-left: 14px; }
.tab .badge { width: 25px; height: 25px; margin: -4px 8px 0 0; border-radius: 13px 13px 13px 0; background: #d3dbe5; color: #1f1f1f; font: 500 14px/25px Roboto, sans-serif; text-align: center; letter-spacing: 0; }
.tab .badge + span { width: 75px; }
.active { width: 151px; padding-left: 15px; background: #e1e9f7; color: #0b57d0; font-weight: 700; letter-spacing: 1.250px; }
.active span { width: 97px; }
.cut { width: 12px; height: 25px; border-radius: 13px 0 0 0; background: #d3dbe5; border-right: 2px solid #c0c0c0; }
.dim { opacity: .4; }

/* side panel */
.side { width: 70px; display: grid; justify-items: center; align-items: start; grid-template-rows: 70px 70px 70px 70px 68px 44px 546px 24px; padding-top: 15px; }
.side hr { width: 25px; height: 1px; margin: 0; border: 0; background: #dadce0; }
```
